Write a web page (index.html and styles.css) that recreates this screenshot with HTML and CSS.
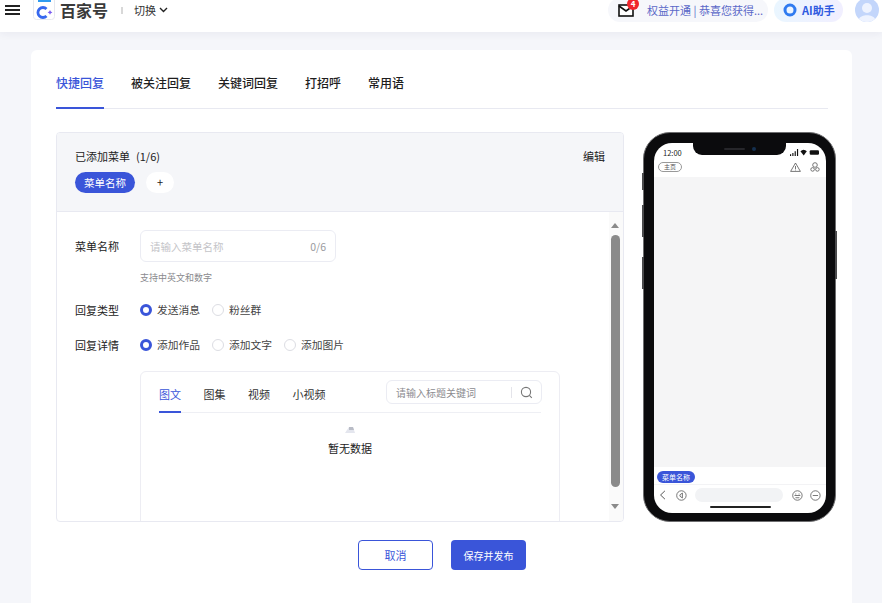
FILE: index.html
```html
<!DOCTYPE html>
<html lang="zh-CN">
<head>
    <meta charset="UTF-8">
    <meta name="viewport" content="width=device-width, initial-scale=1.0">
    <title>百家号 - 快捷回复</title>
    <link rel="stylesheet" href="styles.css">
</head>
<body>
    <header class="topbar">
        <div class="topbar__left">
            <div class="burger"><span></span><span></span><span></span></div>
            <div class="logo">
                <svg width="22" height="22" viewBox="0 0 22 22">
                    <rect x="0.5" y="-2" width="21" height="23.5" rx="3" fill="#fff" stroke="#e6e8ee"/>
                    <rect x="5" y="2" width="13" height="2" fill="#2f9bf0"/>
                    <path d="M13.5 11A5 5 0 1 0 13.5 18" fill="none" stroke="#3768ee" stroke-width="2.8"/>
                    <path d="M17 12l.8 1.6 1.6.8-1.6.8-.8 1.6-.8-1.6-1.6-.8 1.6-.8z" fill="#7a5cf0"/>
                </svg>
                <span class="logo__text">百家号</span>
            </div>
            <i class="topbar__sep"></i>
            <span class="switch">切换
                <svg width="9" height="6" viewBox="0 0 9 6"><path d="M1 1l3.5 3.5L8 1" fill="none" stroke="#222" stroke-width="1.4"/></svg>
            </span>
        </div>
        <div class="topbar__right">
            <div class="notice">
                <span class="mail">
                    <svg width="16" height="13" viewBox="0 0 16 13">
                        <rect x="1" y="1" width="14" height="11" fill="#fff" stroke="#111" stroke-width="1.6"/>
                        <path d="M1 2l7 5 7-5" fill="none" stroke="#111" stroke-width="1.6"/>
                    </svg>
                    <b class="mail__badge">4</b>
                </span>
                <span class="notice__text">权益开通 | 恭喜您获得...</span>
            </div>
            <div class="ai">
                <svg width="14" height="14" viewBox="0 0 14 14"><circle cx="7" cy="7" r="5" fill="none" stroke="#2f7bf0" stroke-width="3"/></svg>
                <span>AI助手</span>
            </div>
            <div class="avatar">
                <svg width="24" height="24" viewBox="0 0 24 24">
                    <circle cx="12" cy="12" r="12" fill="#c3d6fb"/>
                    <circle cx="12" cy="10" r="5" fill="#eef3ff"/>
                    <path d="M4 21c2-5 14-5 16 0a12 12 0 0 1-16 0z" fill="#eef3ff"/>
                </svg>
            </div>
        </div>
    </header>

    <main class="card">
        <nav class="tabs">
            <a class="tabs__item tabs__item--active">快捷回复</a>
            <a class="tabs__item">被关注回复</a>
            <a class="tabs__item">关键词回复</a>
            <a class="tabs__item">打招呼</a>
            <a class="tabs__item">常用语</a>
        </nav>

        <div class="editor">
            <section class="panel">
                <div class="panel__head">
                    <div class="panel__title">
                        <span>已添加菜单<span class="panel__count">(1/6)</span></span>
                        <span>编辑</span>
                    </div>
                    <div class="menu-list">
                        <span class="menu-chip">菜单名称</span>
                        <span class="menu-add">+</span>
                    </div>
                </div>
                <div class="panel__body">
                    <div class="panel__scroll">
                        <div class="field field--input">
                            <label class="field__label">菜单名称</label>
                            <div class="input">
                                <span>请输入菜单名称</span>
                                <span>0/6</span>
                            </div>
                        </div>
                        <p class="hint">支持中英文和数字</p>
                        <div class="field field--type">
                            <label class="field__label">回复类型</label>
                            <div class="radios">
                                <span class="radio radio--on">发送消息</span>
                                <span class="radio">粉丝群</span>
                            </div>
                        </div>
                        <div class="field field--detail">
                            <label class="field__label">回复详情</label>
                            <div class="radios">
                                <span class="radio radio--on">添加作品</span>
                                <span class="radio">添加文字</span>
                                <span class="radio">添加图片</span>
                            </div>
                        </div>
                        <div class="works">
                            <div class="works__top">
                                <div class="works__tabs">
                                    <a class="works__tab works__tab--active">图文</a>
                                    <a class="works__tab">图集</a>
                                    <a class="works__tab">视频</a>
                                    <a class="works__tab">小视频</a>
                                </div>
                                <div class="search">
                                    <span class="search__text">请输入标题关键词</span>
                                    <i class="search__sep"></i>
                                    <svg width="13" height="13" viewBox="0 0 13 13">
                                        <circle cx="6" cy="6" r="4.6" fill="none" stroke="#777" stroke-width="1.1"/>
                                        <path d="M9.4 9.4l2.4 2.4" stroke="#777" stroke-width="1.1"/>
                                    </svg>
                                </div>
                            </div>
                            <div class="empty">
                                <svg width="12" height="9" viewBox="0 0 12 9">
                                    <path d="M1 8l4-6h4l2 6z" fill="#e4e6ee"/>
                                    <path d="M5 2h4l1 3H5z" fill="#b9bcc6"/>
                                </svg>
                                <span>暂无数据</span>
                            </div>
                        </div>
                    </div>
                    <div class="scrollbar">
                        <i class="scrollbar__up"></i>
                        <i class="scrollbar__thumb"></i>
                        <i class="scrollbar__down"></i>
                    </div>
                </div>
            </section>

            <aside class="phone">
                <i class="phone__key phone__key--mute"></i>
                <i class="phone__key phone__key--up"></i>
                <i class="phone__key phone__key--down"></i>
                <i class="phone__key phone__key--power"></i>
                <div class="phone__screen">
                    <div class="phone__status">
                        <span>12:00</span>
                        <div class="notch"><i class="notch__speaker"></i><i class="notch__cam"></i></div>
                        <svg width="29" height="7" viewBox="0 0 25 6">
                            <path d="M0 4.5h1V6H0zM2 3.5h1V6H2zM4 2h1v4H4zM6 0h1v6H6z" fill="#111"/>
                            <path d="M9 2a4 4 0 0 1 5.5 0L11.8 5.5z" fill="#111"/>
                            <rect x="17" y="1" width="8" height="4" rx="1" fill="#111"/>
                        </svg>
                    </div>
                    <div class="phone__nav">
                        <span class="phone__home">主页</span>
                        <div class="phone__actions">
                            <svg width="11" height="10" viewBox="0 0 11 10">
                                <path d="M5.5 1L10.4 9.4H.6z" fill="none" stroke="#555" stroke-width=".8"/>
                                <path d="M5.5 4v3M5.5 7.6v.8" stroke="#555" stroke-width=".8"/>
                            </svg>
                            <svg width="10" height="10" viewBox="0 0 10 10">
                                <circle cx="5" cy="3" r="2.3" fill="none" stroke="#555" stroke-width=".8"/>
                                <circle cx="2.6" cy="7.4" r="1.8" fill="none" stroke="#555" stroke-width=".8"/>
                                <circle cx="7.4" cy="7.4" r="1.8" fill="none" stroke="#555" stroke-width=".8"/>
                            </svg>
                        </div>
                    </div>
                    <div class="phone__chat"></div>
                    <div class="phone__menu"><span class="phone__chip">菜单名称</span></div>
                    <div class="phone__bar">
                        <svg width="7" height="10" viewBox="0 0 7 10"><path d="M6 .8L1.6 5 6 9.2" fill="none" stroke="#555" stroke-width="1"/></svg>
                        <svg class="phone__voice" width="11" height="11" viewBox="0 0 11 11">
                            <circle cx="5.5" cy="5.5" r="4.8" fill="none" stroke="#555" stroke-width=".8"/>
                            <path d="M6.5 3v5L4 6.2V4.8z" fill="none" stroke="#555" stroke-width=".8"/>
                        </svg>
                        <i class="phone__field"></i>
                        <svg width="11" height="11" viewBox="0 0 11 11">
                            <circle cx="5.5" cy="5.5" r="4.8" fill="none" stroke="#555" stroke-width=".8"/>
                            <path d="M2.5 5.5h6M3.5 7.8h4M3.8 3.5v1M7.2 3.5v1" stroke="#555" stroke-width=".8"/>
                        </svg>
                        <svg class="phone__more" width="11" height="11" viewBox="0 0 11 11">
                            <circle cx="5.5" cy="5.5" r="4.8" fill="none" stroke="#555" stroke-width=".8"/>
                            <path d="M2.8 5.5h5.4" stroke="#555" stroke-width=".8"/>
                        </svg>
                    </div>
                    <i class="phone__indicator"></i>
                </div>
            </aside>
        </div>

        <div class="actions">
            <button class="btn btn--ghost">取消</button>
            <button class="btn btn--primary">保存并发布</button>
        </div>
    </main>
</body>
</html>
```

FILE: styles.css
```css
*{
    box-sizing: border-box;
    padding: 0;margin: 0;
}
html, body{
    height: 603px;
    overflow: hidden;
}
body{
    background: #f5f6fa;
    font-family: "Noto Sans CJK SC", "Liberation Sans", sans-serif;
    font-size: 11px;
    color: #222;
}
i{
    display: block;
}

/* top bar, page is scrolled a little so everything sits high */
.topbar{
    height: 32px;
    padding: 0 3px 12px 5px;
    background: #fff;
    box-shadow: 0 2px 8px rgba(30, 40, 90, .06);
    display: flex;
    justify-content: space-between;
    align-items: center;
}
.topbar__left, .topbar__right{
    display: flex;
    align-items: center;
}
.burger{
    width: 15px;
    display: flex;
    flex-direction: column;
    gap: 2px;
    margin-right: 13px;
}
.burger span{
    height: 2px;
    background: #222;
}
.logo{
    display: flex;
    align-items: center;
    gap: 5px;
}
.logo svg{
    display: block;
    margin-top: -2px;
}
.logo__text{
    font-size: 16px;
    font-weight: 700;
    line-height: 18px;
    color: #3a3a3a;
}
.topbar__sep{
    width: 2px;
    height: 7px;
    margin: 0 11px 0 13px;
    background: #d8d8d8;
}
.switch{
    display: flex;
    align-items: center;
    gap: 3px;
    font-size: 11px;
    color: #333;
}
.topbar__right{
    gap: 6px;
}
.notice{
    width: 160px;
    height: 24px;
    padding-left: 10px;
    display: flex;
    align-items: center;
    gap: 13px;
    background: #f6f7fb;
    border-radius: 12px;
}
.mail{
    position: relative;
    display: block;
    height: 13px;
}
.mail svg{
    display: block;
}
.mail__badge{
    position: absolute;
    top: -6px;
    right: -5px;
    width: 12px;
    height: 12px;
    border-radius: 50%;
    background: #f0262c;
    color: #fff;
    font-size: 8px;
    line-height: 12px;
    text-align: center;
}
.notice__text{
    font-size: 11px;
    color: #5a68c8;
    white-space: nowrap;
}
.ai{
    width: 69px;
    height: 24px;
    padding-left: 9px;
    display: flex;
    align-items: center;
    gap: 5px;
    background: linear-gradient(90deg, #eaf6ff, #f1efff);
    border-radius: 12px;
    font-size: 11px;
    font-weight: 700;
    color: #2f5be0;
}
.avatar{
    margin-left: 6px;
    height: 24px;
}

.card{
    width: 821px;
    height: 560px;
    margin: 18px 0 0 31px;
    padding: 0 16px 0 25px;
    background: #fff;
    border-radius: 6px;
}

.tabs{
    height: 59px;
    margin-right: 8px;
    display: flex;
    gap: 27px;
    border-bottom: 1px solid #e8e9f1;
}
.tabs__item{
    height: 59px;
    padding-top: 24px;
    font-size: 12px;
    line-height: 18px;
    font-weight: 500;
    color: #1e1e1e;
}
.tabs__item--active{
    color: #3a55d9;
    border-bottom: 2px solid #3a55d9;
}

.editor{
    margin-top: 23px;
    display: flex;
    justify-content: space-between;
}
.panel{
    width: 568px;
    height: 390px;
    border: 1px solid #e8e9f1;
    border-radius: 4px;
    overflow: hidden;
    display: flex;
    flex-direction: column;
}
.panel__head{
    height: 79px;
    padding: 15px 18px 0;
    background: #f5f6f9;
    border-bottom: 1px solid #e8e9f1;
}
.panel__title{
    display: flex;
    justify-content: space-between;
    line-height: 17px;
    color: #222;
}
.panel__count{
    margin-left: 6px;
}
.menu-list{
    margin-top: 7px;
    display: flex;
    gap: 11px;
}
.menu-chip{
    width: 60px;
    height: 21px;
    border-radius: 11px;
    background: #3a55d9;
    color: #fff;
    font-size: 10.5px;
    line-height: 21px;
    text-align: center;
}
.menu-add{
    width: 28px;
    height: 21px;
    border-radius: 11px;
    background: #fff;
    text-align: center;
    line-height: 21px;
}
.panel__body{
    flex: 1;
    min-height: 0;
    display: flex;
}
.panel__scroll{
    flex: 1;
    padding: 18px 0 0 18px;
    overflow: hidden;
}
.field{
    display: flex;
    align-items: center;
}
.field__label{
    width: 65px;
    color: #222;
}
.input{
    width: 196px;
    height: 32px;
    padding: 0 9px;
    border: 1px solid #ebecf3;
    border-radius: 6px;
    display: flex;
    justify-content: space-between;
    align-items: center;
    font-size: 10.5px;
    color: #c4c4c8;
}
.input span:last-child{
    color: #9a9a9e;
}
.hint{
    margin: 9px 0 0 65px;
    font-size: 9px;
    line-height: 14px;
    color: #8a8a8e;
}
.field--type{
    margin-top: 16px;
}
.field--detail{
    margin-top: 18px;
}
.radios{
    display: flex;
    gap: 12px;
}
.radio{
    display: flex;
    align-items: center;
    gap: 5px;
    font-size: 10.75px;
    line-height: 17px;
    color: #444;
}
.radio::before{
    content: "";
    box-sizing: border-box;
    width: 12px;
    height: 12px;
    border: 1px solid #dcdde3;
    border-radius: 50%;
    background: #fff;
}
.radio--on::before{
    border: 3.5px solid #3a55d9;
}
.works{
    width: 420px;
    height: 200px;
    margin: 18px 0 0 65px;
    padding: 8px 18px 0;
    border: 1px solid #ededf3;
    border-radius: 6px;
}
.works__top{
    height: 33px;
    display: flex;
    justify-content: space-between;
    border-bottom: 1px solid #eeeff4;
}
.works__tabs{
    display: flex;
    gap: 22.5px;
}
.works__tab{
    height: 33px;
    padding-top: 6px;
    line-height: 17px;
    color: #333;
}
.works__tab--active{
    color: #3a55d9;
    border-bottom: 2px solid #3a55d9;
}
.search{
    width: 156px;
    height: 24px;
    margin-right: -1px;
    padding: 0 8px 0 9px;
    display: flex;
    align-items: center;
    border: 1px solid #ebecf3;
    border-radius: 6px;
}
.search__text{
    flex: 1;
    font-size: 10px;
    color: #8c8c90;
}
.search__sep{
    width: 1px;
    height: 11px;
    margin-right: 8px;
    background: #e4e4ea;
}
.empty{
    margin-top: 12px;
    display: flex;
    flex-direction: column;
    align-items: center;
    gap: 6px;
    line-height: 16px;
    color: #222;
}
.scrollbar{
    width: 14px;
    background: #fafafa;
    display: flex;
    flex-direction: column;
    align-items: center;
    padding: 11px 2px 0 0;
}
.scrollbar__thumb{
    width: 9px;
    height: 252px;
    margin: 7px 0 17px;
    border-radius: 5px;
    background: #8a8a8a;
}
.scrollbar__up, .scrollbar__down{
    width: 0;
    height: 0;
    border-left: 4.5px solid transparent;
    border-right: 4.5px solid transparent;
}
.scrollbar__up{
    border-bottom: 5px solid #8a8a8a;
}
.scrollbar__down{
    border-top: 5px solid #8a8a8a;
}

/* phone preview on the right */
.phone{
    position: relative;
    width: 193px;
    height: 390px;
    padding: 10px 9px 8px 10px;
    background: #0b0b0d;
    border: 1.5px solid #6e6e70;
    border-radius: 27px;
}
.phone__key{
    position: absolute;
    width: 2px;
    background: #4a4a4c;
    left: -2px;
}
.phone__key--mute{
    top: 40px;
    height: 17px;
}
.phone__key--up{
    top: 72px;
    height: 32px;
}
.phone__key--down{
    top: 124px;
    height: 32px;
}
.phone__key--power{
    left: auto;
    right: -2px;
    top: 98px;
    height: 48px;
}
.phone__screen{
    position: relative;
    height: 100%;
    background: #fff;
    border-radius: 18px;
    overflow: hidden;
    display: flex;
    flex-direction: column;
}
.phone__status{
    height: 18px;
    padding: 0 7px 0 9px;
    display: flex;
    justify-content: space-between;
    align-items: center;
    font-size: 7.5px;
    color: #222;
}
.notch{
    position: absolute;
    top: -1px;
    left: 39px;
    width: 93px;
    height: 13px;
    background: #0b0b0d;
    border-radius: 0 0 9px 9px;
    display: flex;
    justify-content: center;
    align-items: center;
    gap: 7px;
}
.notch__speaker{
    width: 21px;
    height: 2px;
    border-radius: 1px;
    background: #26262a;
}
.notch__cam{
    width: 4px;
    height: 4px;
    border-radius: 50%;
    background: #15304f;
}
.phone__nav{
    height: 12px;
    margin-bottom: 4px;
    padding: 0 6px 0 4px;
    display: flex;
    justify-content: space-between;
    align-items: center;
}
.phone__home{
    width: 24px;
    height: 10px;
    border: 1px solid #999;
    border-radius: 5px;
    font-size: 6px;
    line-height: 8px;
    text-align: center;
    color: #555;
}
.phone__actions{
    display: flex;
    gap: 9px;
}
.phone__actions svg{
    display: block;
}
.phone__chat{
    flex: 1;
    background: #f5f5f6;
}
.phone__menu{
    height: 18px;
    padding: 4px 0 0 3px;
    border-bottom: 1px solid #f3f3f5;
}
.phone__chip{
    display: block;
    width: 38px;
    height: 12px;
    border-radius: 6px;
    background: #3a55d9;
    color: #fff;
    font-size: 7px;
    line-height: 12px;
    text-align: center;
}
.phone__bar{
    height: 20px;
    padding: 0 5px 0 5px;
    display: flex;
    align-items: center;
}
.phone__voice{
    margin-left: 10px;
}
.phone__field{
    width: 90px;
    height: 14px;
    margin: 0 9px 0 8px;
    border-radius: 7px;
    background: #f2f3f5;
}
.phone__more{
    margin-left: 7px;
}
.phone__indicator{
    width: 61px;
    height: 2px;
    margin: 1px 0 5px 56px;
    background: #222;
    border-radius: 1px;
}

.actions{
    margin: 18px 8px 0 0;
    display: flex;
    justify-content: center;
    gap: 18px;
}
.btn{
    width: 75px;
    height: 30px;
    border-radius: 4px;
    font-family: inherit;
    cursor: pointer;
}
.btn--ghost{
    background: #fff;
    border: 1px solid #3a55d9;
    color: #3a55d9;
    font-size: 11px;
}
.btn--primary{
    background: #3a55d9;
    border: none;
    color: #fff;
    font-size: 10px;
}
```
